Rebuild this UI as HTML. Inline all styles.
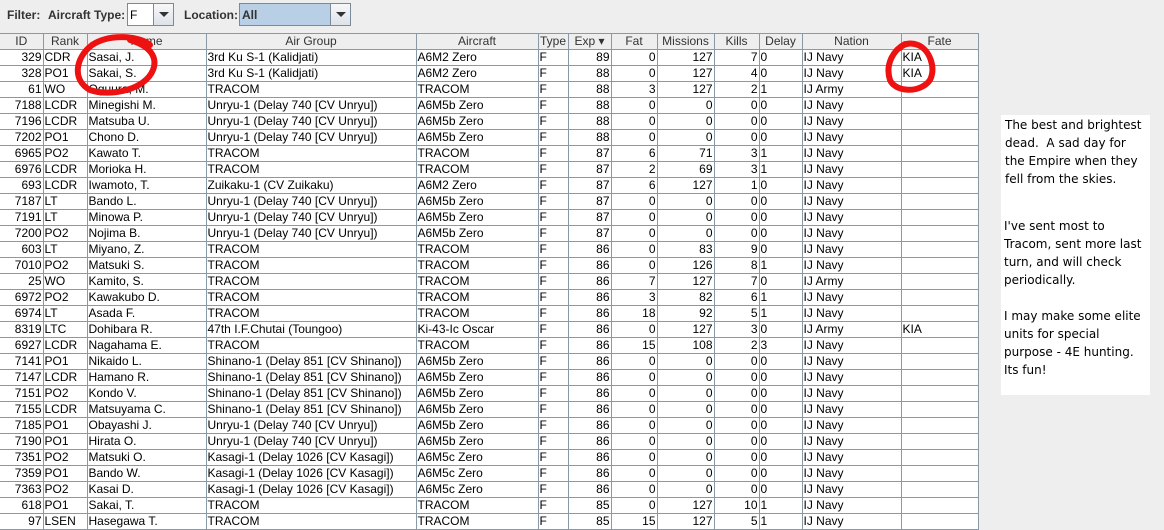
<!DOCTYPE html>
<html><head><meta charset="utf-8"><style>
body{margin:0;width:1164px;height:518px;overflow:hidden;background:#eeeeee;font-family:"Liberation Sans",Arial,sans-serif;font-size:12px;color:#000;position:relative}
.lbl{position:absolute;top:8px;font-weight:bold;font-size:12px;color:#333}
.combo{position:absolute;top:3px;height:23px;border:1px solid #7a8a99;background:#fff;box-sizing:border-box}
.combo .f{position:absolute;left:2px;top:4px}
.combo .b{position:absolute;right:0;top:0;width:19px;height:21px;border-left:1px solid #7a8a99;background:linear-gradient(#f8f8f8,#dde3ea)}
.combo .b:after{content:"";position:absolute;left:5px;top:8px;border-left:5px solid transparent;border-right:5px solid transparent;border-top:5px solid #333}
table{position:absolute;left:0;top:33px;border-collapse:collapse;table-layout:fixed;width:978px;background:#fff}
td,th{height:15px;padding:0 1px;border-right:1px solid #8a99a8;border-bottom:1px solid #8a99a8;white-space:nowrap;overflow:hidden;line-height:15px;font-size:12px}
th{font-weight:normal;background:#eeeeee;text-align:center;border-top:1px solid #8a99a8;color:#333}
td.r{text-align:right}
.note{position:absolute;left:1001px;top:115px;width:149px;height:280px;background:#fff;font-family:"Comic Sans MS","DejaVu Sans",sans-serif;font-size:12px;line-height:18px;color:#000}
.note p{margin:0;padding-left:3px}
</style></head><body>
<div class="lbl" style="left:7px">Filter:</div>
<div class="lbl" style="left:48px">Aircraft Type:</div>
<div class="combo" style="left:127px;width:47px"><span class="f">F</span><div class="b"></div></div>
<div class="lbl" style="left:184px">Location:</div>
<div class="combo" style="left:239px;width:112px;background:#b8cfe5"><span class="f" style="font-weight:bold;color:#333">All</span><div class="b"></div></div>
<table>
<colgroup><col style="width:43px"><col style="width:44px"><col style="width:119px"><col style="width:210px"><col style="width:122px"><col style="width:30px"><col style="width:43px"><col style="width:46px"><col style="width:57px"><col style="width:45px"><col style="width:43px"><col style="width:99px"><col style="width:77px"></colgroup>
<tr><th>ID</th><th>Rank</th><th>Name</th><th>Air Group</th><th>Aircraft</th><th>Type</th><th>Exp &#9662;</th><th>Fat</th><th>Missions</th><th>Kills</th><th>Delay</th><th>Nation</th><th>Fate</th></tr>
<tr><td class="r">329</td><td>CDR</td><td>Sasai, J.</td><td>3rd Ku S-1 (Kalidjati)</td><td>A6M2 Zero</td><td>F</td><td class="r">89</td><td class="r">0</td><td class="r">127</td><td class="r">7</td><td>0</td><td>IJ Navy</td><td>KIA</td></tr>
<tr><td class="r">328</td><td>PO1</td><td>Sakai, S.</td><td>3rd Ku S-1 (Kalidjati)</td><td>A6M2 Zero</td><td>F</td><td class="r">88</td><td class="r">0</td><td class="r">127</td><td class="r">4</td><td>0</td><td>IJ Navy</td><td>KIA</td></tr>
<tr><td class="r">61</td><td>WO</td><td>Oguura, M.</td><td>TRACOM</td><td>TRACOM</td><td>F</td><td class="r">88</td><td class="r">3</td><td class="r">127</td><td class="r">2</td><td>1</td><td>IJ Army</td><td></td></tr>
<tr><td class="r">7188</td><td>LCDR</td><td>Minegishi M.</td><td>Unryu-1 (Delay 740 [CV Unryu])</td><td>A6M5b Zero</td><td>F</td><td class="r">88</td><td class="r">0</td><td class="r">0</td><td class="r">0</td><td>0</td><td>IJ Navy</td><td></td></tr>
<tr><td class="r">7196</td><td>LCDR</td><td>Matsuba U.</td><td>Unryu-1 (Delay 740 [CV Unryu])</td><td>A6M5b Zero</td><td>F</td><td class="r">88</td><td class="r">0</td><td class="r">0</td><td class="r">0</td><td>0</td><td>IJ Navy</td><td></td></tr>
<tr><td class="r">7202</td><td>PO1</td><td>Chono D.</td><td>Unryu-1 (Delay 740 [CV Unryu])</td><td>A6M5b Zero</td><td>F</td><td class="r">88</td><td class="r">0</td><td class="r">0</td><td class="r">0</td><td>0</td><td>IJ Navy</td><td></td></tr>
<tr><td class="r">6965</td><td>PO2</td><td>Kawato T.</td><td>TRACOM</td><td>TRACOM</td><td>F</td><td class="r">87</td><td class="r">6</td><td class="r">71</td><td class="r">3</td><td>1</td><td>IJ Navy</td><td></td></tr>
<tr><td class="r">6976</td><td>LCDR</td><td>Morioka H.</td><td>TRACOM</td><td>TRACOM</td><td>F</td><td class="r">87</td><td class="r">2</td><td class="r">69</td><td class="r">3</td><td>1</td><td>IJ Navy</td><td></td></tr>
<tr><td class="r">693</td><td>LCDR</td><td>Iwamoto, T.</td><td>Zuikaku-1 (CV Zuikaku)</td><td>A6M2 Zero</td><td>F</td><td class="r">87</td><td class="r">6</td><td class="r">127</td><td class="r">1</td><td>0</td><td>IJ Navy</td><td></td></tr>
<tr><td class="r">7187</td><td>LT</td><td>Bando L.</td><td>Unryu-1 (Delay 740 [CV Unryu])</td><td>A6M5b Zero</td><td>F</td><td class="r">87</td><td class="r">0</td><td class="r">0</td><td class="r">0</td><td>0</td><td>IJ Navy</td><td></td></tr>
<tr><td class="r">7191</td><td>LT</td><td>Minowa P.</td><td>Unryu-1 (Delay 740 [CV Unryu])</td><td>A6M5b Zero</td><td>F</td><td class="r">87</td><td class="r">0</td><td class="r">0</td><td class="r">0</td><td>0</td><td>IJ Navy</td><td></td></tr>
<tr><td class="r">7200</td><td>PO2</td><td>Nojima B.</td><td>Unryu-1 (Delay 740 [CV Unryu])</td><td>A6M5b Zero</td><td>F</td><td class="r">87</td><td class="r">0</td><td class="r">0</td><td class="r">0</td><td>0</td><td>IJ Navy</td><td></td></tr>
<tr><td class="r">603</td><td>LT</td><td>Miyano, Z.</td><td>TRACOM</td><td>TRACOM</td><td>F</td><td class="r">86</td><td class="r">0</td><td class="r">83</td><td class="r">9</td><td>0</td><td>IJ Navy</td><td></td></tr>
<tr><td class="r">7010</td><td>PO2</td><td>Matsuki S.</td><td>TRACOM</td><td>TRACOM</td><td>F</td><td class="r">86</td><td class="r">0</td><td class="r">126</td><td class="r">8</td><td>1</td><td>IJ Navy</td><td></td></tr>
<tr><td class="r">25</td><td>WO</td><td>Kamito, S.</td><td>TRACOM</td><td>TRACOM</td><td>F</td><td class="r">86</td><td class="r">7</td><td class="r">127</td><td class="r">7</td><td>0</td><td>IJ Army</td><td></td></tr>
<tr><td class="r">6972</td><td>PO2</td><td>Kawakubo D.</td><td>TRACOM</td><td>TRACOM</td><td>F</td><td class="r">86</td><td class="r">3</td><td class="r">82</td><td class="r">6</td><td>1</td><td>IJ Navy</td><td></td></tr>
<tr><td class="r">6974</td><td>LT</td><td>Asada F.</td><td>TRACOM</td><td>TRACOM</td><td>F</td><td class="r">86</td><td class="r">18</td><td class="r">92</td><td class="r">5</td><td>1</td><td>IJ Navy</td><td></td></tr>
<tr><td class="r">8319</td><td>LTC</td><td>Dohibara R.</td><td>47th I.F.Chutai (Toungoo)</td><td>Ki-43-Ic Oscar</td><td>F</td><td class="r">86</td><td class="r">0</td><td class="r">127</td><td class="r">3</td><td>0</td><td>IJ Army</td><td>KIA</td></tr>
<tr><td class="r">6927</td><td>LCDR</td><td>Nagahama E.</td><td>TRACOM</td><td>TRACOM</td><td>F</td><td class="r">86</td><td class="r">15</td><td class="r">108</td><td class="r">2</td><td>3</td><td>IJ Navy</td><td></td></tr>
<tr><td class="r">7141</td><td>PO1</td><td>Nikaido L.</td><td>Shinano-1 (Delay 851 [CV Shinano])</td><td>A6M5b Zero</td><td>F</td><td class="r">86</td><td class="r">0</td><td class="r">0</td><td class="r">0</td><td>0</td><td>IJ Navy</td><td></td></tr>
<tr><td class="r">7147</td><td>LCDR</td><td>Hamano R.</td><td>Shinano-1 (Delay 851 [CV Shinano])</td><td>A6M5b Zero</td><td>F</td><td class="r">86</td><td class="r">0</td><td class="r">0</td><td class="r">0</td><td>0</td><td>IJ Navy</td><td></td></tr>
<tr><td class="r">7151</td><td>PO2</td><td>Kondo V.</td><td>Shinano-1 (Delay 851 [CV Shinano])</td><td>A6M5b Zero</td><td>F</td><td class="r">86</td><td class="r">0</td><td class="r">0</td><td class="r">0</td><td>0</td><td>IJ Navy</td><td></td></tr>
<tr><td class="r">7155</td><td>LCDR</td><td>Matsuyama C.</td><td>Shinano-1 (Delay 851 [CV Shinano])</td><td>A6M5b Zero</td><td>F</td><td class="r">86</td><td class="r">0</td><td class="r">0</td><td class="r">0</td><td>0</td><td>IJ Navy</td><td></td></tr>
<tr><td class="r">7185</td><td>PO1</td><td>Obayashi J.</td><td>Unryu-1 (Delay 740 [CV Unryu])</td><td>A6M5b Zero</td><td>F</td><td class="r">86</td><td class="r">0</td><td class="r">0</td><td class="r">0</td><td>0</td><td>IJ Navy</td><td></td></tr>
<tr><td class="r">7190</td><td>PO1</td><td>Hirata O.</td><td>Unryu-1 (Delay 740 [CV Unryu])</td><td>A6M5b Zero</td><td>F</td><td class="r">86</td><td class="r">0</td><td class="r">0</td><td class="r">0</td><td>0</td><td>IJ Navy</td><td></td></tr>
<tr><td class="r">7351</td><td>PO2</td><td>Matsuki O.</td><td>Kasagi-1 (Delay 1026 [CV Kasagi])</td><td>A6M5c Zero</td><td>F</td><td class="r">86</td><td class="r">0</td><td class="r">0</td><td class="r">0</td><td>0</td><td>IJ Navy</td><td></td></tr>
<tr><td class="r">7359</td><td>PO1</td><td>Bando W.</td><td>Kasagi-1 (Delay 1026 [CV Kasagi])</td><td>A6M5c Zero</td><td>F</td><td class="r">86</td><td class="r">0</td><td class="r">0</td><td class="r">0</td><td>0</td><td>IJ Navy</td><td></td></tr>
<tr><td class="r">7363</td><td>PO2</td><td>Kasai D.</td><td>Kasagi-1 (Delay 1026 [CV Kasagi])</td><td>A6M5c Zero</td><td>F</td><td class="r">86</td><td class="r">0</td><td class="r">0</td><td class="r">0</td><td>0</td><td>IJ Navy</td><td></td></tr>
<tr><td class="r">618</td><td>PO1</td><td>Sakai, T.</td><td>TRACOM</td><td>TRACOM</td><td>F</td><td class="r">85</td><td class="r">0</td><td class="r">127</td><td class="r">10</td><td>1</td><td>IJ Navy</td><td></td></tr>
<tr><td class="r">97</td><td>LSEN</td><td>Hasegawa T.</td><td>TRACOM</td><td>TRACOM</td><td>F</td><td class="r">85</td><td class="r">15</td><td class="r">127</td><td class="r">5</td><td>1</td><td>IJ Navy</td><td></td></tr>
</table>
<div class="note">
<p style="padding-top:1px;padding-left:4px">The best and brightest<br>dead.&nbsp; A sad day for<br>the Empire when they<br>fell from the skies.</p>
<p style="margin-top:29px">I've sent most to<br>Tracom, sent more last<br>turn, and will check<br>periodically.</p>
<p style="margin-top:18px">I may make some elite<br>units for special<br>purpose - 4E hunting.<br>Its fun!</p>
</div>
<svg style="position:absolute;left:0;top:0" width="1164" height="518">
<path d="M150,45 C140,36 110,33 92,45 C75,58 72,80 90,90 C110,97 145,90 153,70 C158,57 150,46 130,40" fill="none" stroke="#ee1111" stroke-width="6" stroke-linecap="round"/>
<path d="M905,44 C893,50 885,65 890,80 C895,92 920,94 930,80 C936,68 930,50 918,45 C910,42 903,44 900,48" fill="none" stroke="#ee1111" stroke-width="6" stroke-linecap="round"/>
</svg>
</body></html>
